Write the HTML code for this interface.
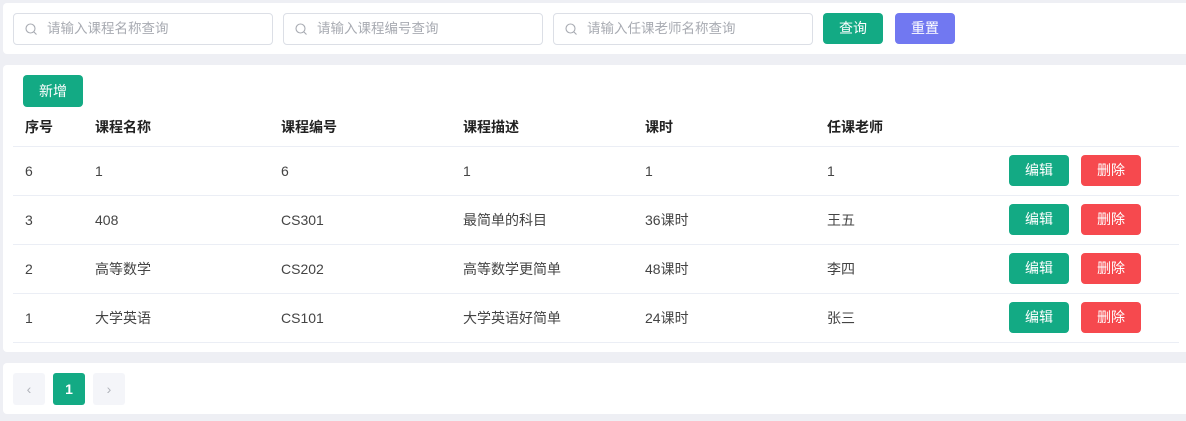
<!DOCTYPE html><html><head><meta charset="utf-8"><style>
body{margin:0;width:1186px;height:421px;background:#eeeff4;font-family:"Liberation Sans","Noto Sans CJK SC",sans-serif;font-size:14px;color:#444;position:relative;overflow:hidden}
.card{position:absolute;left:3px;width:1190px;background:#fff;border-radius:4px}
.inp{position:absolute;top:13px;width:258px;height:30px;border:1px solid #dcdfe6;border-radius:4px;color:#a8abb2;font-size:13.5px;line-height:30px;box-sizing:content-box}
.inp svg{position:absolute;left:11px;top:9px}
.inp span{position:absolute;left:33px}
.btn{position:absolute;width:60px;height:31px;border-radius:4px;color:#fff;text-align:center;line-height:31px;font-size:14px}
.g{background:#13aa84}.p{background:#7178f1}.r{background:#f6494e}
.t{position:absolute;white-space:nowrap;line-height:20px;height:20px}
.h{font-weight:bold;color:#222;top:117px}
.line{position:absolute;left:13px;width:1166px;height:1px;background:#ebeef5}
.pg{position:absolute;top:373px;width:32px;height:32px;border-radius:3px;background:#f4f5f9;color:#b0b3ba;text-align:center;line-height:32px}
.r1{top:161px}.r2{top:210px}.r3{top:259px}.r4{top:308px}
</style></head><body>
<div class="card" style="top:3px;height:51px"></div>
<div class="card" style="top:65px;height:287px"></div>
<div class="card" style="top:363px;height:51px"></div>

<div class="inp" style="left:13px"><svg width="12" height="12" viewBox="0 0 12 12"><circle cx="5.5" cy="5.5" r="4.5" fill="none" stroke="#a8abb2" stroke-width="1.1"/><path d="M9 9l2.5 2.5" stroke="#a8abb2" stroke-width="1.1"/></svg><span>请输入课程名称查询</span></div>
<div class="inp" style="left:283px"><svg width="12" height="12" viewBox="0 0 12 12"><circle cx="5.5" cy="5.5" r="4.5" fill="none" stroke="#a8abb2" stroke-width="1.1"/><path d="M9 9l2.5 2.5" stroke="#a8abb2" stroke-width="1.1"/></svg><span>请输入课程编号查询</span></div>
<div class="inp" style="left:553px"><svg width="12" height="12" viewBox="0 0 12 12"><circle cx="5.5" cy="5.5" r="4.5" fill="none" stroke="#a8abb2" stroke-width="1.1"/><path d="M9 9l2.5 2.5" stroke="#a8abb2" stroke-width="1.1"/></svg><span>请输入任课老师名称查询</span></div>
<div class="btn g" style="left:823px;top:13px">查询</div>
<div class="btn p" style="left:895px;top:13px">重置</div>

<div class="btn g" style="left:23px;top:75px;height:32px;line-height:32px">新增</div>
<div class="t h" style="left:25px">序号</div>
<div class="t h" style="left:95px">课程名称</div>
<div class="t h" style="left:281px">课程编号</div>
<div class="t h" style="left:463px">课程描述</div>
<div class="t h" style="left:645px">课时</div>
<div class="t h" style="left:827px">任课老师</div>
<div class="line" style="top:146px"></div>
<div class="line" style="top:195px"></div>
<div class="line" style="top:244px"></div>
<div class="line" style="top:293px"></div>
<div class="line" style="top:342px"></div>

<div class="t r1" style="left:25px">6</div><div class="t r1" style="left:95px">1</div><div class="t r1" style="left:281px">6</div><div class="t r1" style="left:463px">1</div><div class="t r1" style="left:645px">1</div><div class="t r1" style="left:827px">1</div>
<div class="t r2" style="left:25px">3</div><div class="t r2" style="left:95px">408</div><div class="t r2" style="left:281px">CS301</div><div class="t r2" style="left:463px">最简单的科目</div><div class="t r2" style="left:645px">36课时</div><div class="t r2" style="left:827px">王五</div>
<div class="t r3" style="left:25px">2</div><div class="t r3" style="left:95px">高等数学</div><div class="t r3" style="left:281px">CS202</div><div class="t r3" style="left:463px">高等数学更简单</div><div class="t r3" style="left:645px">48课时</div><div class="t r3" style="left:827px">李四</div>
<div class="t r4" style="left:25px">1</div><div class="t r4" style="left:95px">大学英语</div><div class="t r4" style="left:281px">CS101</div><div class="t r4" style="left:463px">大学英语好简单</div><div class="t r4" style="left:645px">24课时</div><div class="t r4" style="left:827px">张三</div>

<div class="btn g" style="left:1009px;top:155px">编辑</div><div class="btn r" style="left:1081px;top:155px">删除</div>
<div class="btn g" style="left:1009px;top:204px">编辑</div><div class="btn r" style="left:1081px;top:204px">删除</div>
<div class="btn g" style="left:1009px;top:253px">编辑</div><div class="btn r" style="left:1081px;top:253px">删除</div>
<div class="btn g" style="left:1009px;top:302px">编辑</div><div class="btn r" style="left:1081px;top:302px">删除</div>

<div class="pg" style="left:13px">‹</div>
<div class="pg" style="left:53px;background:#13aa84;color:#fff;font-weight:bold">1</div>
<div class="pg" style="left:93px">›</div>
</body></html>
